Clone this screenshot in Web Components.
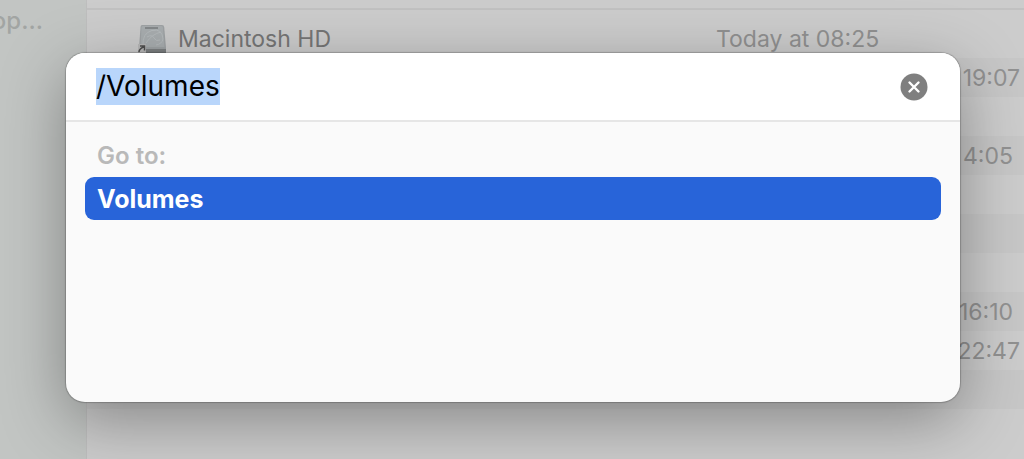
<!DOCTYPE html>
<html lang="en">
<head>
<meta charset="utf-8">
<title>Go to Folder</title>
<style>
  html, body { height: 100%; margin: 0; }
  body {
    overflow: hidden;
    background: #cccccc;
    font-family: Inter, "Liberation Sans", sans-serif;
  }
</style>
</head>
<body>
<finder-window>
  <finder-sidebar slot="sidebar">op...</finder-sidebar>
  <file-list></file-list>
  <goto-sheet slot="sheet" value="/Volumes">
    <goto-option>Volumes</goto-option>
  </goto-sheet>
</finder-window>

<script>
const attach = (element, html) => {
  const template = document.createElement('template');
  template.innerHTML = html;
  element.attachShadow({ mode: 'open' });
  element.shadowRoot.appendChild(template.content.cloneNode(true));
};

class FinderWindow extends HTMLElement {
  constructor() {
    super();
    attach(this, `
      <style>
        :host { display: flex; position: relative; height: 100%; overflow: hidden; }
        main { flex: 1; min-width: 0; }
      </style>
      <slot name="sidebar"></slot>
      <main><slot></slot></main>
      <slot name="sheet"></slot>
    `);
  }
}

class FinderSidebar extends HTMLElement {
  constructor() {
    super();
    attach(this, `
      <style>
        :host {
          display: block;
          box-sizing: border-box;
          width: 87px;
          padding-right: 43px;
          background: #c2c5c3;
          border-right: 1px solid #bebebe;
          color: #a2a5a3;
          font-size: 24px;
          font-weight: 500;
          line-height: 42px;
        }
        div { display: flex; justify-content: flex-end; }
      </style>
      <div><slot></slot></div>
    `);
  }
}

class DiskIcon extends HTMLElement {
  constructor() {
    super();
    attach(this, `
      <style>
        :host { display: block; width: 30px; height: 32px; }
        svg { display: block; }
      </style>
      <svg width="30" height="32" viewBox="0 0 30 32" aria-hidden="true">
        <path d="M4 1h20q2 0 2.200 2L28 24v5q0 1-1 1H2q-1 0-1-1v-5L2.500 3Q2.700 1 4 1z" fill="#9fa3a5"/>
        <path d="M4.500 2h19q1.200 0 1.400 1.500L26.500 23H2.500L3.500 3.500Q3.700 2 4.500 2z" fill="#a9aeb0"/>
        <path d="M7 3h13v2H7z" fill="#85898b"/>
        <path d="M5 22Q4 9 14 6.500T25 15q-1 5-7 6M8 19q6-9 15-11M9 13q5-3 7 1t6 2" fill="none" stroke="#b6bbbd"/>
        <path d="M1 25h27v4q0 1-1 1H2q-1 0-1-1z" fill="#7c7f80"/>
        <path d="M0 20h8v9H0z" fill="#b9b9b9"/>
        <path d="M1 28q0-3 5-5.500M2 22h4.500v4.500" fill="none" stroke="#4e4e4e" stroke-width="1.500"/>
      </svg>
    `);
  }
}

class FileList extends HTMLElement {
  constructor() {
    super();
    attach(this, `
      <style>
        :host { display: block; padding-top: 8px; }
        .head { height: 9px; border-top: 2px solid #c1c1c1; }
        table { width: 100%; table-layout: fixed; border-collapse: collapse; font-size: 23px; line-height: 27px; }
        tr { height: 39px; }
        tr:nth-child(even) { background: #c7c7c7; }
        td { padding: 2px 0 0; white-space: nowrap; color: #919191; }
        td:last-child { width: 308px; }
        .name { display: flex; align-items: center; gap: 10px; padding-left: 51px; color: #767676; }
        .wide, .narrow { box-sizing: border-box; text-align: right; }
        .wide { padding-right: 4px; }
        .narrow { padding-right: 11px; }
      </style>
      <div class="head"></div>
      <table aria-label="Files">
        <tr><td><div class="name"><disk-icon></disk-icon>Macintosh HD</div></td><td>Today at 08:25</td></tr>
        <tr><td></td><td class="wide">19:07</td></tr>
        <tr><td></td><td></td></tr>
        <tr><td></td><td class="narrow">4:05</td></tr>
        <tr><td></td><td></td></tr>
        <tr><td></td><td></td></tr>
        <tr><td></td><td></td></tr>
        <tr><td></td><td class="narrow">16:10</td></tr>
        <tr><td></td><td class="wide">22:47</td></tr>
        <tr><td></td><td></td></tr>
        <tr><td></td><td></td></tr>
      </table>
    `);
  }
}

class GotoSheet extends HTMLElement {
  constructor() {
    super();
    attach(this, `
      <style>
        /* the sheet floats over the file list */
        :host {
          display: block;
          position: absolute;
          top: 53px;
          left: 66px;
          right: 64px;
          overflow: hidden;
          border-radius: 19px;
          background: #fafafa;
          box-shadow: 0 0 1px 1px rgba(0, 0, 0, .2), 0 18px 64px rgba(0, 0, 0, .34);
        }
        form {
          display: flex;
          align-items: center;
          gap: 16px;
          padding: 15px 32px 15px 30px;
          background: #fff;
          border-bottom: 2px solid #e6e6e6;
        }
        input {
          flex: 1;
          min-width: 0;
          height: 37px;
          padding: 0;
          border: 0;
          outline: 0;
          background: none;
          color: #000;
          font: 28px/37px Inter, "Liberation Sans", sans-serif;
        }
        input::selection { background: #b9d6fb; color: #000; }
        button { display: block; padding: 0; border: 0; background: none; }
        svg { display: block; }
        section { min-height: 280px; box-sizing: border-box; padding: 18px 19px 16px; }
        h2 { margin: 0 0 5px; padding-left: 12px; color: #b9b9b9; font-size: 24px; font-weight: 600; line-height: 32px; }
      </style>
      <form>
        <input type="text" aria-label="Go to folder" spellcheck="false">
        <button type="button" aria-label="Clear">
          <svg width="28" height="28" viewBox="0 0 28 28">
            <circle cx="14" cy="14" r="13.500" fill="#7f7f7f"/>
            <path d="M9.500 9.500l9 9M18.500 9.500l-9 9" stroke="#fff" stroke-width="2.400" stroke-linecap="round"/>
          </svg>
        </button>
      </form>
      <section>
        <h2>Go to:</h2>
        <slot></slot>
      </section>
    `);

    this._input = this.shadowRoot.querySelector('input');
    this.shadowRoot.querySelector('button').addEventListener('click', (_) => {
      this._input.value = '';
      this._input.focus();
    });
    this.shadowRoot.querySelector('form').addEventListener('submit', (e) => e.preventDefault());
  }

  connectedCallback() {
    this._input.value = this.getAttribute('value');
    this._input.focus();
    this._input.select();
  }
}

class GotoOption extends HTMLElement {
  constructor() {
    super();
    attach(this, `
      <style>
        :host { display: block; }
        button {
          display: block;
          width: 100%;
          padding: 1px 12px 0;
          border: 0;
          border-radius: 9px;
          background: #2864d9;
          color: #fff;
          font: 700 25px/42px Inter, "Liberation Sans", sans-serif;
          text-align: left;
        }
      </style>
      <button type="button"><slot></slot></button>
    `);
  }
}

customElements.define('finder-window', FinderWindow);
customElements.define('finder-sidebar', FinderSidebar);
customElements.define('disk-icon', DiskIcon);
customElements.define('file-list', FileList);
customElements.define('goto-sheet', GotoSheet);
customElements.define('goto-option', GotoOption);
</script>
</body>
</html>
